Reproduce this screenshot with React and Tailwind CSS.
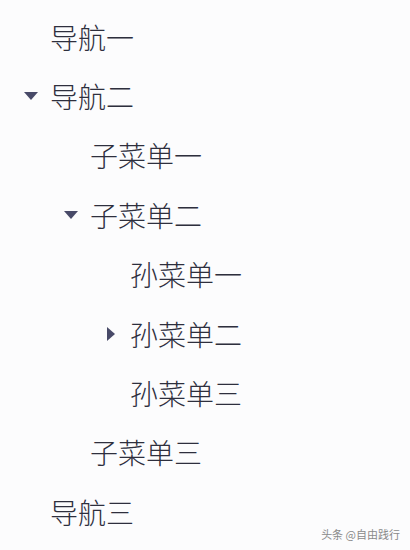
import React from 'react';

const items = [
  { label: '导航一', level: 0 },
  { label: '导航二', level: 0, arrow: 'down' },
  { label: '子菜单一', level: 1 },
  { label: '子菜单二', level: 1, arrow: 'down' },
  { label: '孙菜单一', level: 2 },
  { label: '孙菜单二', level: 2, arrow: 'right' },
  { label: '孙菜单三', level: 2 },
  { label: '子菜单三', level: 1 },
  { label: '导航三', level: 0 },
];

const indent = ['pl-[50px]', 'pl-[90px]', 'pl-[130px]'];

const Arrow = ({ dir }) =>
  dir === 'down' ? (
    <svg width="14" height="8" viewBox="0 0 14 8" className="absolute left-[-26px] top-1/2 -translate-y-1/2">
      <path d="M0 0 L14 0 L7 8 Z" fill="#484a68" />
    </svg>
  ) : (
    <svg width="8" height="14" viewBox="0 0 8 14" className="absolute left-[-23px] top-1/2 -translate-y-1/2">
      <path d="M0 0 L8 7 L0 14 Z" fill="#484a68" />
    </svg>
  );

export default function App() {
  return (
    <div
      className="relative w-[410px] h-[550px] bg-[#fcfcfd] pt-[7px] overflow-hidden"
      style={{ fontFamily: '"Noto Sans CJK SC", "Noto Sans", sans-serif' }}
    >
      <ul>
        {items.map((it) => (
          <li key={it.label} className={`h-[59.4px] flex items-center ${indent[it.level]}`}>
            <span className="relative text-[28px] leading-none font-light text-[#2e2f3d]">
              {it.arrow && <Arrow dir={it.arrow} />}
              {it.label}
            </span>
          </li>
        ))}
      </ul>
      <div className="absolute right-[10px] bottom-[8px] text-[11px] text-[#8a8a8a]">头条 @自由践行</div>
    </div>
  );
}
